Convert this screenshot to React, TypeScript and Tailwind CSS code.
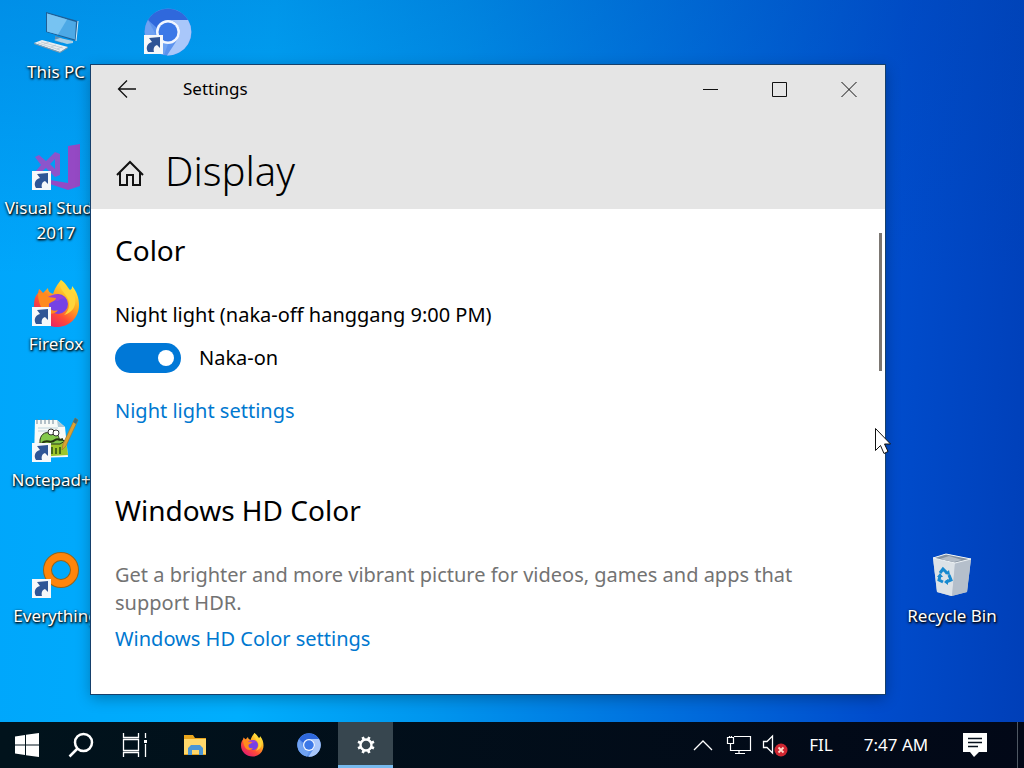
import { useState, type ReactElement, type ReactNode } from "react";

interface DesktopItem {
  label: string;
  icon: ReactElement;
  place: string;
  covered?: boolean;
}

function ShortcutBadge() {
  return (
    <g>
      <rect x="0" y="27" width="19" height="19" fill="#f6f8fa" />
      <path d="M4 44c-3-5 0-9 4-10l-3-4 11-1v11l-3-3c-3 1-4 4-3 7z" fill="#2f5596" />
    </g>
  );
}

function ThisPcIcon() {
  return (
    <svg viewBox="0 0 48 48" className="h-12 w-12">
      <path d="M23 28l7 2v5l-7-2z" fill="#5d8fb5" />
      <path d="M22 32l6-2 13 3v2l-6 1z" fill="#a9cfe4" />
      <path d="M14 4l32 9-2 20-30-9z" fill="#1f5f96" />
      <path d="M15 5.500l29 8.500-1 17.500-28-8z" fill="#4da9e6" />
      <path d="M15 5.500l20 6-9 15-11-3z" fill="#77c3f2" />
      <path d="M46 13l-2 20" stroke="#d6ecf8" strokeWidth="1" />
      <path d="M2 35l8-3 26 7-8 5z" fill="#e9eef1" />
      <path d="M2 35l26 9 8-5v1l-8 5-26-9z" fill="#8f9ba5" />
      <path d="M6 35l22 7M9 34l22 6M12 36l5-2M19 39l5-2M25 41l5-2" stroke="#b8c3cb" strokeWidth="0.700" />
    </svg>
  );
}

function ChromiumIcon({ className }: { className: string }) {
  return (
    <svg viewBox="0 0 48 48" className={className}>
      <circle cx="24" cy="24" r="23.500" fill="#5c93ee" />
      <path d="M4 12a23.500 23.500 0 0 1 40 0H24a12 12 0 0 0-11 8z" fill="#2f68dc" />
      <path d="M4 12l9 17a12 12 0 0 0 11 7l-4 11A23.500 23.500 0 0 1 4 12z" fill="#6fa2f2" />
      <path d="M24 12h20a23.500 23.500 0 0 1-21 35.500l11-17a12 12 0 0 0-10-18.500z" fill="#a9c7fa" />
      <circle cx="24" cy="24" r="12" fill="#f1f6ff" />
      <circle cx="24" cy="24" r="9.500" fill="#3b78e7" />
    </svg>
  );
}

function FirefoxIcon({ className }: { className: string }) {
  return (
    <svg viewBox="0 0 48 48" className={className}>
      <defs>
        <linearGradient id="flame" x1="0.800" y1="0.100" x2="0.200" y2="0.950">
          <stop offset="0" stopColor="#ffe83f" />
          <stop offset="0.350" stopColor="#ffa51f" />
          <stop offset="0.650" stopColor="#ff4b37" />
          <stop offset="1" stopColor="#e01a72" />
        </linearGradient>
      </defs>
      <path
        d="M29 0c5 3 6 7 9 10 2-1 2-2 2-4 5 6 7 12 7 19 0 13-10 22-22 22S2 38 2 25c0-5 1-9 4-12l1-4c2 1 3 3 4 4l5-5c0 4 3 5 5 6 2-6 4-9 8-14z"
        fill="url(#flame)"
      />
      <circle cx="26" cy="24" r="10" fill="#7542e5" />
      <path d="M14 19c5-6 15-6 20 0-4-1-6 0-8 2z" fill="#9b3fd8" />
      <path d="M6 13c6-1 9 1 10 4l8 1c0 3-6 4-7 6-1 5 4 8 9 6-3 5-11 5-15 0-3-4-5-10-5-17z" fill="#ff8a1e" />
      <path d="M29 0c-4 8 4 12 7 19 3 6 0 13-4 16 8-2 13-9 11-18-2-7-12-8-14-17z" fill="#ffd53a" />
    </svg>
  );
}

function VisualStudioIcon() {
  return (
    <svg viewBox="0 0 48 48" className="h-12 w-12">
      <path d="M36 2l12-2v42l-12 4-18-6v-4l18 3z" fill="#9549c4" />
      <path
        d="M3 13l4-2 7 6 9-9 5 2v21l-5 2-9-9-7 6-4-2 6-7zM23 15l-5 5 5 5z"
        fill="#8c55cb"
        fillRule="evenodd"
      />
      <ShortcutBadge />
    </svg>
  );
}

function NotepadIcon() {
  return (
    <svg viewBox="0 0 48 48" className="h-12 w-12">
      <path d="M3 4h22l8 7 3 30-34 1z" fill="#f7faf7" />
      <path d="M25 4l8 7h-7z" fill="#abc9d6" />
      <path d="M5 3v5M9 3v5M13 3v5M17 3v5M21 3v5" stroke="#6f8799" strokeWidth="1" />
      <path d="M6 12h20M6 15h22" stroke="#bdd4dd" strokeWidth="1" />
      <path d="M5 27l29-3 2 15-31 2z" fill="#9dc52b" />
      <path d="M8 24c1-7 7-9 11-6 5-2 8 1 8 5l6 2-5 3H8z" fill="#83c94b" stroke="#26351d" />
      <circle cx="19" cy="16" r="3" fill="#fff" stroke="#333" />
      <circle cx="24" cy="17" r="3" fill="#fff" stroke="#333" />
      <path d="M10 27c6-5 8 2 13-3 3-2 4 1 8-1" fill="none" stroke="#24330f" strokeWidth="2" />
      <path d="M20 31v7M24 32v6M28 31v7" stroke="#466b18" strokeWidth="2" />
      <path d="M43 2l3 2-12 26-4 4 1-6z" fill="#dda233" stroke="#a07a35" strokeWidth="0.700" />
      <path d="M43 2l3 2-2 4-3-2z" fill="#3a6e83" />
      <ShortcutBadge />
    </svg>
  );
}

function EverythingIcon() {
  return (
    <svg viewBox="0 0 48 48" className="h-12 w-12">
      <circle cx="29" cy="18" r="13.500" fill="none" stroke="#92641c" strokeWidth="9" />
      <circle cx="29" cy="18" r="13.500" fill="none" stroke="#ff850b" strokeWidth="7" />
      <ShortcutBadge />
    </svg>
  );
}

function RecycleBinIcon() {
  return (
    <svg viewBox="0 0 48 48" className="h-12 w-12">
      <path d="M5 6l13-4 25 5-4 33-16 4-14-4z" fill="#c6ced8" />
      <path d="M5 6l22 5-3 33-15-4z" fill="#dce2e7" />
      <path d="M27 11l16-4-4 33-15 4z" fill="#b5bfcb" />
      <path d="M5 6l13-4 25 5-16 4z" fill="#8592a0" stroke="#eff4f7" />
      <path d="M12 7l9-3 13 4-8 2z" fill="#b3bcc6" />
      <g fill="none" stroke="#1689cf" strokeWidth="3">
        <path d="M12 21l3-4 4 4" />
        <path d="M21 23l2 5-5 2" />
        <path d="M15 30l-4-2 1-4" />
      </g>
      <path d="M17 22l5 1-1-5zM20 27l-4 3 4 3zM9 25l3-4 3 4z" fill="#1689cf" />
    </svg>
  );
}

const desktopItems: DesktopItem[] = [
  { label: "This PC", icon: <ThisPcIcon />, place: "col-start-1 row-start-1" },
  {
    label: "Chromium",
    icon: (
      <>
        <ChromiumIcon className="h-12 w-12" />
        <svg viewBox="0 0 48 48" className="-mt-12 h-12 w-12">
          <ShortcutBadge />
        </svg>
      </>
    ),
    place: "col-start-2 row-start-1",
    covered: true,
  },
  { label: "Visual Studio 2017", icon: <VisualStudioIcon />, place: "col-start-1 row-start-2" },
  {
    label: "Firefox",
    icon: (
      <>
        <FirefoxIcon className="h-12 w-12" />
        <svg viewBox="0 0 48 48" className="-mt-12 h-12 w-12">
          <ShortcutBadge />
        </svg>
      </>
    ),
    place: "col-start-1 row-start-3",
  },
  { label: "Notepad++", icon: <NotepadIcon />, place: "col-start-1 row-start-4" },
  { label: "Everything", icon: <EverythingIcon />, place: "col-start-1 row-start-5" },
  { label: "Recycle Bin", icon: <RecycleBinIcon />, place: "col-start-9 row-start-5" },
];

function Desktop() {
  return (
    <div className="grid auto-rows-[136px] grid-cols-[repeat(9,112px)]">
      {desktopItems.map((item) => (
        <button
          key={item.label}
          aria-label={item.label}
          className={`flex flex-col items-center pt-2 text-[17px] leading-[25px] text-white [text-shadow:1px_1px_2px_#000,0_1px_3px_#000] ${item.place}`}
        >
          {item.icon}
          {!item.covered && <span className="mt-[3px] w-28">{item.label}</span>}
        </button>
      ))}
    </div>
  );
}

function SettingsWindow() {
  const [nightLight, setNightLight] = useState(true);

  return (
    <section
      aria-label="Settings"
      className="absolute top-[65px] right-[139px] bottom-[28px] left-[91px] flex flex-col bg-white text-black shadow-[0_0_0_1px_#16406c,0_4px_14px_rgba(0,0,0,0.3)]"
    >
      <header className="bg-[#e5e5e5]">
        <div className="flex h-12 items-center pr-0.5">
          <button aria-label="Back" className="flex h-12 w-[72px] items-center justify-center">
            <svg viewBox="0 0 20 20" className="h-5 w-5" fill="none" stroke="#111" strokeWidth="1.300">
              <path d="M19 10H1.500M10 1.500L1.500 10l8.500 8.500" />
            </svg>
          </button>
          <span className="ml-5 flex-1 text-[17px]">Settings</span>
          <button aria-label="Minimize" className="flex h-12 w-[69px] items-center justify-center">
            <svg viewBox="0 0 16 16" className="h-4 w-4" stroke="#111">
              <path d="M0 8.500h15" />
            </svg>
          </button>
          <button aria-label="Maximize" className="flex h-12 w-[69px] items-center justify-center">
            <svg viewBox="0 0 16 16" className="h-4 w-4" fill="none" stroke="#111">
              <path d="M.5 1.500h14v14H.500z" />
            </svg>
          </button>
          <button aria-label="Close" className="flex h-12 w-[69px] items-center justify-center">
            <svg viewBox="0 0 16 16" className="h-4 w-4" stroke="#111">
              <path d="M.5 1l15 15M15.500 1l-15 15" />
            </svg>
          </button>
        </div>
        <div className="flex h-24 items-center gap-5 pt-6 pl-6">
          <button aria-label="Home">
            <svg viewBox="0 0 30 30" className="h-[30px] w-[30px]" fill="none" stroke="#111" strokeWidth="2">
              <path d="M2 17L15 4l13 13M5 14v13h7V17h6v10h7V14" />
            </svg>
          </button>
          <h1 className="pb-1 text-[40px] leading-[56px] font-light">Display</h1>
        </div>
      </header>

      <div className="flex flex-1 justify-between pt-6 pr-[3px] pl-6">
        <div className="flex max-w-[700px] flex-col items-start text-xl leading-7">
          <h2 className="text-[28px] leading-[34px]">Color</h2>
          <p className="mt-[34px]" id="night-light">
            Night light (naka-off hanggang 9:00 PM)
          </p>
          <label className="mt-[14px] flex items-center gap-[18px]">
            <input
              type="checkbox"
              role="switch"
              aria-labelledby="night-light"
              checked={nightLight}
              onChange={(e) => setNightLight(e.target.checked)}
              className="flex h-[30px] w-[66px] appearance-none items-center justify-start rounded-full bg-[#767676] px-[7px] before:h-4 before:w-4 before:rounded-full before:bg-white checked:justify-end checked:bg-[#0078d7]"
            />
            <span>{nightLight ? "Naka-on" : "Naka-off"}</span>
          </label>
          <a href="#night-light" className="mt-6 text-[#0078d0]">
            Night light settings
          </a>
          <h2 id="hd-color" className="mt-[68px] text-[28px] leading-[34px]">
            Windows HD Color
          </h2>
          <p className="mt-[34px] text-[#737373]">
            Get a brighter and more vibrant picture for videos, games and apps that support HDR.
          </p>
          <a href="#hd-color" className="mt-2 text-[#0078d0]">
            Windows HD Color settings
          </a>
        </div>
        <div className="h-[138px] w-[3px] shrink-0 bg-[#7c7772]" />
      </div>
    </section>
  );
}

function TaskButton({ label, active, children }: { label: string; active?: boolean; children: ReactNode }) {
  return (
    <button
      aria-label={label}
      className={
        active
          ? "flex w-[55px] items-center justify-center border-b-[3px] border-[#76b9ed] bg-[#37464f] pt-[3px]"
          : "flex w-[55px] items-center justify-center"
      }
    >
      {children}
    </button>
  );
}

function Taskbar() {
  return (
    <footer className="flex h-[46px] bg-linear-to-r from-[#01131c] to-[#020817] text-[17px] text-white">
      <button aria-label="Start" className="flex w-[54px] items-center justify-center">
        <svg viewBox="0 0 24 24" className="h-6 w-6" fill="#fff">
          <path d="M0 3.500l10-1.500v9.500H0zM11 1.800L24 0v11.500H11zM0 12.500h10V22L0 20.500zM11 12.500h13V24l-13-1.800z" />
        </svg>
      </button>
      <button aria-label="Search" className="flex w-[54px] items-center justify-center">
        <svg viewBox="0 0 26 26" className="h-[26px] w-[26px]" fill="none" stroke="#fff" strokeWidth="2.500">
          <circle cx="15.500" cy="10.500" r="8.500" />
          <path d="M9.500 16.500l-8 8" />
        </svg>
      </button>
      <button aria-label="Task View" className="flex w-[54px] items-center justify-center">
        <svg viewBox="0 0 26 24" className="h-6 w-[26px]" fill="none" stroke="#fff" strokeWidth="1.300">
          <path d="M1.500 0v4.500h15V0M1.500 24v-4.500h15V24M1.500 6.500h15v11h-15zM23.500 0v5M23.500 11v13" />
          <path d="M22 7h3v3h-3z" fill="#fff" stroke="none" />
        </svg>
      </button>

      <nav className="ml-[5px] flex gap-[2px]">
        <TaskButton label="File Explorer">
          <svg viewBox="0 0 24 22" className="h-[22px] w-6">
            <path d="M1 1h9l2 3h11v17H1z" fill="#e8a51c" />
            <path d="M1 5h22v15H1z" fill="#ffd86b" />
            <path d="M5 21v-7l3-3h9l3 3v7h-4v-5h-7v5z" fill="#4a96d6" />
          </svg>
        </TaskButton>
        <TaskButton label="Firefox">
          <FirefoxIcon className="h-6 w-6" />
        </TaskButton>
        <TaskButton label="Chromium">
          <ChromiumIcon className="h-6 w-6" />
        </TaskButton>
        <TaskButton label="Settings" active>
          <svg viewBox="0 0 20 20" className="h-5 w-5" fill="none" stroke="#fff">
            <circle cx="10" cy="10" r="5.500" strokeWidth="2.400" />
            <path
              d="M11.800 5.600l1.200-2.800M8.200 14.400L7 17.200M5.600 8.200L2.800 7M14.400 11.800l2.800 1.200M8.200 5.600L7 2.800M11.800 14.400l1.200 2.800M5.600 11.800L2.800 13M14.400 8.200L17.200 7"
              transform="translate(-1.100 -1.100) scale(1.110)"
              strokeWidth="2.400"
            />
          </svg>
        </TaskButton>
      </nav>

      <div className="ml-auto flex items-center">
        <button aria-label="Show hidden icons" className="flex w-9 justify-center">
          <svg viewBox="0 0 20 12" className="h-3 w-5" fill="none" stroke="#fff" strokeWidth="1.300">
            <path d="M1 11l9-9 9 9" />
          </svg>
        </button>
        <button aria-label="Network" className="flex w-9 justify-center">
          <svg viewBox="0 0 26 20" className="h-5 w-[26px]" fill="none" stroke="#fff" strokeWidth="1.200">
            <path d="M8 1.500h16.500v14H4.500V9M1.500 2.500h6v6h-6zM3.500 1v2M5.500 1v2M13 15.500v3M9 18.500h10" />
          </svg>
        </button>
        <button aria-label="Volume" className="flex w-9 justify-center">
          <svg viewBox="0 0 26 24" className="h-6 w-[26px]">
            <path d="M1.500 8.500H5L10.500 3v17L5 14.500H1.500z" fill="none" stroke="#fff" strokeWidth="1.300" />
            <circle cx="19" cy="17" r="6.500" fill="#cf2631" />
            <path d="M16.500 14.500l5 5M21.500 14.500l-5 5" stroke="#ffd9c8" strokeWidth="1.800" />
          </svg>
        </button>
        <button className="w-14">FIL</button>
        <time className="w-[94px] text-center">7:47 AM</time>
        <button aria-label="Notifications" className="flex w-16 justify-center">
          <svg viewBox="0 0 24 24" className="h-6 w-6">
            <path d="M0 0h24v19h-8l-5 5-4-5H0z" fill="#fff" />
            <path d="M5 5.500h14M5 9.500h14M5 13.500h10" stroke="#06101c" strokeWidth="1.300" />
          </svg>
        </button>
        <button aria-label="Show desktop" className="ml-2.5 h-full w-[7px] border-l border-[#4f5863]" />
      </div>
    </footer>
  );
}

export default function App() {
  return (
    <div className="flex min-h-screen flex-col overflow-hidden font-['Noto_Sans','Segoe_UI',sans-serif]">
      <main className="relative flex-1 overflow-hidden bg-[linear-gradient(180deg,rgba(0,70,170,0.24)_0%,rgba(0,70,170,0)_38%),linear-gradient(93deg,#00a6fb_0%,#00aefd_26%,#0096ee_44%,#006cdc_68%,#004ccc_86%,#003fb8_100%)]">
        <Desktop />
        <SettingsWindow />
        <svg viewBox="0 0 18 28" className="absolute top-[427px] left-[874px] h-7 w-[18px]">
          <path d="M1.500 1.500v22l5-5 3.500 8 4-2-3.500-7.500h6z" fill="#fff" stroke="#111" />
        </svg>
      </main>
      <Taskbar />
    </div>
  );
}
